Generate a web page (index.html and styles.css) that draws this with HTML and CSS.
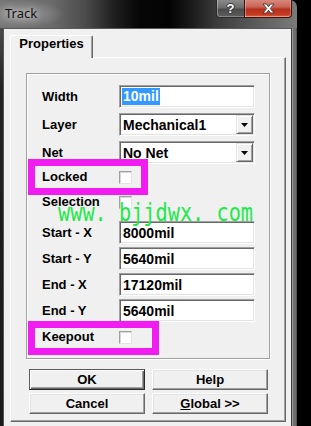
FILE: index.html
```html
<!DOCTYPE html>
<html>
<head>
<meta charset="utf-8">
<title>Track</title>
<link rel="stylesheet" href="styles.css">
</head>
<body>
<div class="window">
  <div class="titlebar">
    <span class="title">Track</span>
    <div class="caption">
      <div class="cbtn help"><span class="qmark">?</span></div>
      <div class="cbtn close">
        <svg width="13" height="11" viewBox="-1 -1 13 11"><path d="M0 0H3.5L5.5 2.8L7.5 0H11L7.3 4.5L11 9H7.5L5.5 6.2L3.5 9H0L3.7 4.5Z" fill="#fff" stroke="#3a3a3a" stroke-width="0.9" stroke-linejoin="round"/></svg>
      </div>
    </div>
  </div>
  <div class="frame">
    <div class="frame-l"></div>
    <div class="client">
      <div class="tabs"><div class="tab">Properties</div></div>
      <div class="panel">
        <div class="group">
          <div class="row"><span class="lbl">Width</span><div class="field first"><span class="sel">10mil</span></div></div>
          <div class="row r-5"><span class="lbl">Layer</span><div class="field combo"><span>Mechanical1</span><div class="dd"><svg width="7" height="4" viewBox="0 0 7 4"><path d="M0 0H7L3.5 4Z" fill="#000"/></svg></div></div></div>
          <div class="row r-5"><span class="lbl">Net</span><div class="field combo"><span>No Net</span><div class="dd"><svg width="7" height="4" viewBox="0 0 7 4"><path d="M0 0H7L3.5 4Z" fill="#000"/></svg></div></div></div>
          <div class="row tall r-1"><span class="lbl">Locked</span><span class="chk"></span></div>
          <div class="row tall r-1"><span class="lbl">Selection</span><span class="chk"></span></div>
          <div class="row r-7"><span class="lbl">Start - X</span><div class="field">8000mil</div></div>
          <div class="row r-3"><span class="lbl">Start - Y</span><div class="field">5640mil</div></div>
          <div class="row r-3"><span class="lbl">End - X</span><div class="field">17120mil</div></div>
          <div class="row r-3"><span class="lbl">End - Y</span><div class="field">5640mil</div></div>
          <div class="row tall r-3"><span class="lbl">Keepout</span><span class="chk"></span></div>
          <div class="mark mark-locked"></div>
          <div class="mark mark-keepout"></div>
          <div class="watermark">www. bjjdwx. com</div>
        </div>
        <div class="btns">
          <div class="btn default">OK</div>
          <div class="btn">Help</div>
          <div class="btn">Cancel</div>
          <div class="btn"><span><u>G</u>lobal &gt;&gt;</span></div>
        </div>
      </div>
    </div>
    <div class="frame-r"></div>
  </div>
</div>
</body>
</html>
```
FILE: styles.css
```css
* { box-sizing: border-box; }
html, body { margin: 0; padding: 0; }
body {
  background: #000;
  width: 311px;
  height: 426px;
  overflow: hidden;
  font-family: "Liberation Sans", Arial, sans-serif;
  color: #000;
}
.window {
  width: 297px;
  height: 426px;
  display: flex;
  flex-direction: column;
}
.titlebar {
  height: 28px;
  flex: none;
  display: flex;
  align-items: flex-start;
  border-top-right-radius: 7px;
  background:
    radial-gradient(ellipse 42px 14px at 22px 14px, rgba(190,190,190,.55), rgba(190,190,190,0) 100%),
    linear-gradient(to right, #767676 0px, #6c6c6c 50px, #4c4c4c 85px, #1e1e1e 115px, #060606 140px, #040404 170px, #1e1e1e 195px, #3a3a3a 215px, #575757 250px, #7a7a7a 297px);
}
.title {
  margin: 4px 0 0 5px;
  font: 13px/18px "Noto Sans", "DejaVu Sans", sans-serif;
  color: #111;
  text-shadow: 0 0 6px rgba(255,255,255,.55), 0 0 10px rgba(255,255,255,.35);
}
.caption {
  margin-left: auto;
  margin-right: 5px;
  display: flex;
}
.cbtn {
  height: 18px;
  display: flex;
  align-items: center;
  justify-content: center;
  border: 1px solid #2a2a2a;
  border-top: none;
}
.help {
  width: 28px;
  border-bottom-left-radius: 4px;
  border-right: none;
  background: linear-gradient(to bottom, #8a8a8a 0%, #6c6c6c 45%, #4a4a4a 55%, #5e5e5e 100%);
  box-shadow: inset 1px 0 0 rgba(255,255,255,.35), inset 0 -1px 0 rgba(255,255,255,.25);
}
.qmark {
  font: 700 13px/13px "Liberation Sans", Arial, sans-serif;
  color: #fff;
  text-shadow: -1px 0 #333, 1px 0 #333, 0 -1px #333, 0 1px #333;
}
.close {
  width: 48px;
  border-bottom-right-radius: 4px;
  border-color: #3a1410;
  background: linear-gradient(to bottom, #d8887c 0%, #c96556 40%, #b5301c 55%, #c53a22 85%, #e06040 100%);
  box-shadow: inset 1px 0 0 rgba(255,200,190,.45), inset -1px 0 0 rgba(255,200,190,.35), inset 0 -1px 0 rgba(255,210,190,.5);
}
.frame {
  flex: 1;
  display: flex;
  min-height: 0;
}
.frame-l {
  width: 4px;
  background: linear-gradient(to bottom, #4a4a4a 0px, #222 60px, #1a1a1a 100%);
  box-shadow: inset -1px 0 0 #555;
}
.frame-r {
  width: 6px;
  background: linear-gradient(to right, #3a3a3a 0 1px, #9a9a9a 1px 2px, #6e6e6e 2px 5px, #555 5px 6px);
}
.client {
  width: 287px;
  background: #f0f0f0;
  border-top: 1px solid #5a5a5a;
  padding: 6px 5px 0 6px;
}
.tabs {
  height: 22px;
  display: flex;
}
.tab {
  position: relative;
  z-index: 1;
  width: 83px;
  height: 23px;
  background: #f0f0f0;
  border: 1px solid;
  border-color: #fff #696969 transparent #fff;
  border-bottom: none;
  border-radius: 2px 2px 0 0;
  box-shadow: inset -1px 0 0 #a0a0a0;
  font: 700 13px/16px "Liberation Sans", Arial, sans-serif;
  text-align: center;
}
.panel {
  width: 276px;
  height: 365px;
  border: 1px solid;
  border-color: #fff #696969 #696969 #fff;
  box-shadow: inset -1px -1px 0 #a0a0a0;
  padding: 15px 15px 0 15px;
}
.group {
  position: relative;
  width: 244px;
  height: 286px;
  border: 1px solid #a0a0a0;
  box-shadow: inset 1px 1px 0 #fff, 1px 1px 0 #fff;
  padding: 11px 0 0 15px;
}
.row {
  display: flex;
  align-items: center;
  height: 23px;
}
.row.tall { height: 24px; }
.r-1 { margin-top: 1px; }
.r-3 { margin-top: 3px; }
.r-5 { margin-top: 5px; }
.r-7 { margin-top: 7px; }
.lbl {
  width: 77px;
  font: 700 13px/16px "Liberation Sans", Arial, sans-serif;
  white-space: nowrap;
}
.field {
  width: 136px;
  height: 23px;
  display: flex;
  align-items: center;
  background: #fff;
  border: 1px solid;
  border-color: #a0a0a0 #fff #fff #a0a0a0;
  box-shadow: inset 1px 1px 0 #696969, inset -1px -1px 0 #e3e3e3;
  padding: 0 1px 0 3px;
  font: 700 14px/16px "Liberation Sans", Arial, sans-serif;
  white-space: nowrap;
}
.field.first { padding-left: 2px; }
.sel {
  background: #3399ff;
  color: #fff;
  padding: 0 1px;
  line-height: 17px;
}
.dd {
  margin-left: auto;
  width: 17px;
  height: 19px;
  background: #f0f0f0;
  border: 1px solid;
  border-color: #e3e3e3 #696969 #696969 #e3e3e3;
  box-shadow: inset 1px 1px 0 #fff, inset -1px -1px 0 #a0a0a0;
  display: flex;
  align-items: center;
  justify-content: center;
}
.dd svg { display: block; }
.chk {
  width: 13px;
  height: 13px;
  background: #fff;
  border: 1px solid;
  border-color: #a0a0a0 #e3e3e3 #e3e3e3 #a0a0a0;
  box-shadow: inset 1px 1px 0 #d8d8d8;
}
.mark {
  position: absolute;
  left: 1px;
  border: 7px solid #f11cf0;
}
.mark-locked { top: 85px; width: 120px; height: 36px; }
.mark-keepout { top: 247px; width: 131px; height: 34px; }
.watermark {
  position: absolute;
  left: 31px;
  top: 126px;
  font: 25px/25px "DejaVu Sans Mono", monospace;
  color: #22e84a;
  white-space: pre;
  transform: scaleX(0.81);
  transform-origin: left top;
}
.btns {
  display: grid;
  grid-template-columns: 116px 116px;
  column-gap: 7px;
  row-gap: 3px;
  margin: 10px 0 0 3px;
}
.btn {
  height: 21px;
  display: flex;
  align-items: center;
  justify-content: center;
  background: #f0f0f0;
  border: 1px solid;
  border-color: #fff #696969 #696969 #fff;
  box-shadow: inset -1px -1px 0 #a0a0a0, inset 1px 1px 0 #e3e3e3;
  font: 700 13px/16px "Liberation Sans", Arial, sans-serif;
}
.btn.default {
  border-color: #5a5a5a #2a2a2a #2a2a2a #5a5a5a;
  box-shadow: inset 1px 1px 0 #fff, inset -1px -1px 0 #696969, inset -2px -2px 0 #a0a0a0;
}
```
